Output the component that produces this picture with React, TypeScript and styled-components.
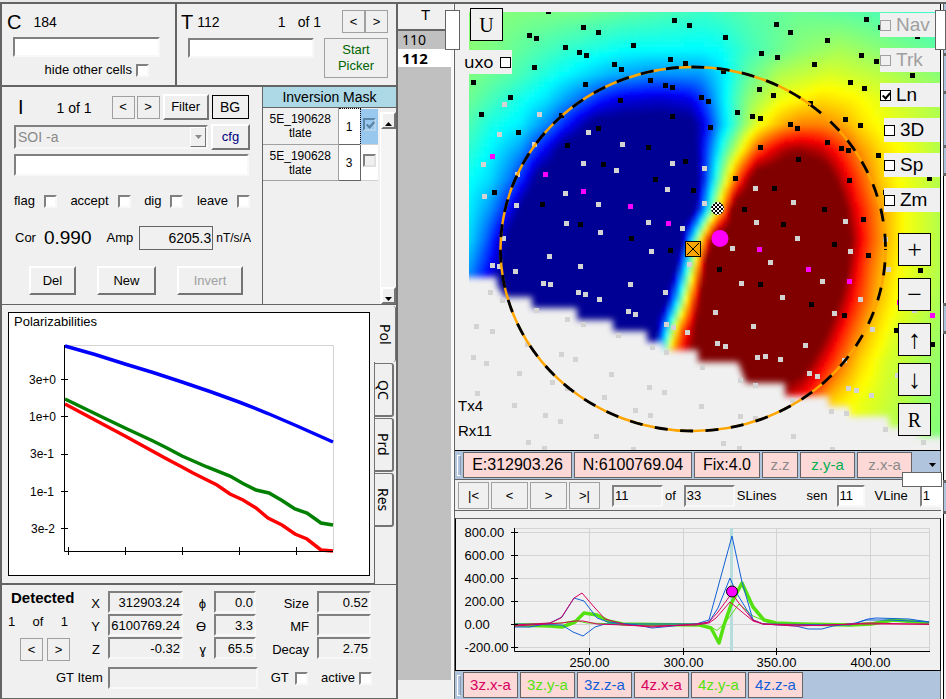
import React from 'react';
import styled, { createGlobalStyle, css } from 'styled-components';

const GlobalStyle = createGlobalStyle`
  * { box-sizing: border-box; }
  body {
    margin: 0;
    background: #f0f0f0;
    color: #000;
    font: 13px/16px "Liberation Sans", Arial, sans-serif;
  }
  button, input, select { font: inherit; color: inherit; margin: 0; border-radius: 0; }
`;

const LINE = '#646464';

/* ---------- shared controls ---------- */

const sunken = css`
  border: 2px solid;
  border-color: #808080 #f8f8f8 #f8f8f8 #808080;
`;

const TextBox = styled.input<{ $w?: number; $readonly?: boolean; $right?: boolean; $h?: number }>`
  ${sunken}
  width: ${p => (p.$w ? `${p.$w}px` : '100%')};
  height: ${p => p.$h ?? 22}px;
  flex: none;
  padding: 0 1px;
  background: ${p => (p.$readonly ? '#f0f0f0' : '#fff')};
  text-align: ${p => (p.$right ? 'right' : 'left')};
  outline: none;
`;

const Tick = styled.input.attrs({ type: 'checkbox' })<{ $flat?: boolean }>`
  appearance: none;
  flex: none;
  width: ${p => (p.$flat ? 11 : 13)}px;
  height: ${p => (p.$flat ? 11 : 13)}px;
  background: #fff;
  ${p => (p.$flat ? css`border: 1px solid #000;` : sunken)}
  position: relative;
  &:disabled { background: #f0f0f0; border-color: #a0a0a0; }
  &:checked::after {
    content: "";
    position: absolute;
    left: 3px;
    top: 0;
    width: 3px;
    height: 6px;
    border: solid #000;
    border-width: 0 2px 2px 0;
    transform: rotate(42deg);
  }
`;

const FlatButton = styled.button<{ $w: number; $h?: number; $color?: string }>`
  width: ${p => p.$w}px;
  height: ${p => p.$h ?? 23}px;
  flex: none;
  padding: 0;
  background: #f0f0f0;
  border: 1px solid #a0a0a0;
  color: ${p => p.$color ?? '#000'};
`;

const RaisedButton = styled.button<{ $w: number; $h?: number; $color?: string }>`
  width: ${p => p.$w}px;
  height: ${p => p.$h ?? 26}px;
  flex: none;
  padding: 0;
  background: #f0f0f0;
  border: 2px solid;
  border-color: #fff #747474 #747474 #fff;
  color: ${p => p.$color ?? '#000'};
  &:disabled { color: #a0a0a0; }
`;

const CheckLabel = styled.label<{ $gap?: number }>`
  display: flex;
  align-items: center;
  gap: ${p => p.$gap ?? 4}px;
`;

const Row = styled.div<{ $gap?: number; $h?: number }>`
  display: flex;
  align-items: center;
  gap: ${p => p.$gap ?? 4}px;
  height: ${p => (p.$h ? `${p.$h}px` : 'auto')};
`;

const Big = styled.span`
  font-size: 20px;
  line-height: 24px;
`;

const Medium = styled.span`
  font-size: 14px;
`;

/* ---------- page frame ---------- */

const Page = styled.main`
  display: grid;
  grid-template-columns: 397px 56px 2px minmax(0, 1fr) 5px;
  grid-template-rows: 4px auto;
  min-height: 100vh;
  position: relative;
`;

const TopEdge = styled.div`
  grid-column: 1 / -1;
  background: #e8e8e8;
  border-bottom: 2px solid ${LINE};
`;

const Sidebar = styled.div`
  display: flex;
  flex-direction: column;
  border-left: 2px solid ${LINE};
  border-right: 1px solid ${LINE};
`;

const Split = styled.div`
  background: #fff;
  border-right: 1px solid ${LINE};
`;

const Handle = styled.div<{ $left?: number; $right?: number; $top: number; $w: number; $h: number }>`
  position: absolute;
  z-index: 2;
  top: ${p => p.$top}px;
  ${p => (p.$left !== undefined ? `left: ${p.$left}px;` : '')}
  ${p => (p.$right !== undefined ? `right: ${p.$right}px;` : '')}
  width: ${p => p.$w}px;
  height: ${p => p.$h}px;
  background: #fff;
  border: 1px solid ${LINE};
`;

/* ---------- cell and target ---------- */

const TopPanels = styled.div`
  display: grid;
  grid-template-columns: 175px 1fr;
  height: 83px;
  border-bottom: 2px solid ${LINE};
`;

const CellPanel = styled.section`
  border-right: 2px solid ${LINE};
  padding: 5px 14px 0 5px;
`;

const CellField = styled.div`
  padding: 3px 0 5px 6px;
  display: flex;
`;

const CellCheck = styled(CheckLabel)`
  justify-content: flex-end;
  padding-right: 12px;
`;

const TargetPanel = styled.section`
  padding: 5px 8px 0 4px;
`;

const Spacer = styled.span`
  flex: 1;
`;

const Count = styled.span<{ $gap?: number }>`
  display: flex;
  gap: ${p => p.$gap ?? 4}px;
  font-size: 14px;
`;

const Pair = styled.span`
  display: flex;
  padding-left: 17px;
`;

const TargetFields = styled.div`
  display: flex;
  justify-content: space-between;
  padding: 4px 0 0 7px;
`;

/* ---------- inversion ---------- */

const Middle = styled.div`
  display: grid;
  grid-template-columns: 261px 1fr;
  height: 218px;
  border-bottom: 1px solid ${LINE};
`;

const InversionPanel = styled.section`
  border-right: 1px solid ${LINE};
  padding: 7px 12px 0;
`;

const InversionHead = styled.div`
  display: flex;
  align-items: center;
  height: 26px;
  padding-left: 4px;
`;

const InversionCount = styled.span`
  font-size: 14px;
  padding: 2px 20px 0 33px;
  white-space: nowrap;
`;

const BgButton = styled(RaisedButton)`
  border: 1px solid #000;
  margin-left: 3px;
  font-size: 14px;
`;

const StepButtons = styled.span`
  display: flex;
  gap: 2px;
  padding-right: 3px;
`;

const SelectWrap = styled.div`
  position: relative;
  width: 194px;
`;

const Select = styled.select`
  ${sunken}
  appearance: none;
  width: 100%;
  height: 24px;
  padding: 0 2px;
  font-size: 14px;
  background: #f0f0f0;
  opacity: 1;
  &:disabled { color: #8a8a8a; }
`;

const SelectArrow = styled.span`
  position: absolute;
  right: 2px;
  top: 2px;
  width: 16px;
  height: 20px;
  display: grid;
  place-items: center;
  background: #f0f0f0;
  border: 1px solid;
  border-color: #fff #747474 #747474 #fff;
  pointer-events: none;
`;

const Flags = styled.div`
  display: flex;
  justify-content: space-between;
  padding: 17px 0 14px;
`;

const Fit = styled.div`
  display: flex;
  align-items: center;
  height: 30px;
  padding-left: 1px;
  white-space: nowrap;
`;

const Cor = styled.output`
  font-size: 19px;
  padding: 0 15px 0 8px;
`;

const AmpBox = styled(TextBox)`
  border: 1px solid ${LINE};
  margin: 0 3px 0 6px;
  font-size: 14px;
`;

const Unit = styled.span`
  font-size: 12px;
`;

const Actions = styled.div`
  display: flex;
  justify-content: space-between;
  padding: 13px 7px 0 15px;
`;

const MaskPanel = styled.section`
  display: flex;
  flex-direction: column;
`;

const MaskTitle = styled.h2`
  margin: 0;
  height: 21px;
  font: 14px/20px "Liberation Sans", Arial, sans-serif;
  text-align: center;
  background: #add8e6;
  border-bottom: 1px solid ${LINE};
`;

const MaskBody = styled.div`
  flex: 1;
  display: flex;
  justify-content: space-between;
`;

const MaskTable = styled.table`
  border-collapse: collapse;
  align-self: flex-start;
  font-size: 12px;
  line-height: 14px;
  table-layout: fixed;
  width: 115px;
  th, td { height: 36px; padding: 0; text-align: center; font-weight: normal; }
  th { border-bottom: 1px solid #a0a0a0; border-right: 1px solid #a0a0a0; }
`;

const MaskNumber = styled.td<{ $focus?: boolean }>`
  width: 22px;
  background: #fff;
  border: 1px solid ${LINE};
  ${p => (p.$focus ? 'border: 1px dotted #000;' : '')}
`;

const MaskCheck = styled.td<{ $on?: boolean }>`
  width: 18px;
  vertical-align: top;
  background: ${p => (p.$on ? '#99c8ee' : '#fff')};
  border-bottom: 1px solid #d0d0d0;
  input {
    margin-top: 9px;
    background: ${p => (p.$on ? 'transparent' : '#f0f0f0')};
    border-color: ${p => (p.$on ? '#5d87a8 #b4d4ec #b4d4ec #5d87a8' : '#808080 #e0e0e0 #e0e0e0 #808080')};
  }
  input:checked::after { border-color: #56819f; }
`;

const ScrollTrack = styled.div`
  width: 16px;
  margin-top: 4px;
  display: flex;
  flex-direction: column;
  justify-content: space-between;
  background: #f4f4f4;
  border-left: 1px solid #fff;
`;

/* ---------- tabs ---------- */

const TabArea = styled.section`
  display: grid;
  grid-template-columns: 1fr 21px;
  height: 278px;
  margin-top: 1px;
`;

const TabBody = styled.div`
  padding: 6px 4px 6px 6px;
  border-bottom: 1px solid ${LINE};
  border-right: 1px solid ${LINE};
`;

const PlotFrame = styled.div`
  height: 264px;
  background: #fff;
  border: 1px solid #000;
  svg { display: block; width: 100%; height: 100%; }
`;

const TabList = styled.div`
  display: flex;
  flex-direction: column;
  gap: 1px;
  margin-left: -1px;
`;

const Tab = styled.button<{ $active?: boolean }>`
  writing-mode: vertical-rl;
  width: ${p => (p.$active ? 22 : 20)}px;
  height: ${p => (p.$active ? 56 : 54)}px;
  padding: 0;
  font: 14px/18px "Noto Sans", sans-serif;
  text-align: center;
  background: #f0f0f0;
  border: solid #747474;
  border-width: ${p => (p.$active ? '0 1px 0 0' : '1px 2px 2px 1px')};
  border-radius: 0 3px 3px 0;
`;

/* ---------- detected ---------- */

const DetectedPanel = styled.section`
  flex: 1;
  border-top: 1px solid ${LINE};
  border-bottom: 1px solid ${LINE};
  padding: 6px 0;
`;

const DetectedGrid = styled.div`
  display: grid;
  grid-template-columns: 74px 32px 75px 31px 42px 61px 54px;
  grid-auto-rows: 23px;
  label { font-size: 13px; line-height: 25px; text-align: right; padding-right: 8px; }
`;

const DetectedSide = styled.div`
  grid-row: 1 / span 3;
  h2 { margin: -2px 0 7px 9px; font-size: 15px; line-height: 18px; }
`;

const DetectedCount = styled.div`
  display: flex;
  justify-content: space-between;
  padding: 0 8px 0 6px;
`;

const DetectedSteps = styled.div`
  display: flex;
  gap: 4px;
  padding: 8px 0 0 18px;
`;

const TruthRow = styled.div`
  display: flex;
  align-items: center;
  padding: 7px 24px 0 54px;
  white-space: nowrap;
`;

const TruthInput = styled(TextBox)`
  margin: 0 13px 0 5px;
`;

/* ---------- target list ---------- */

const ListColumn = styled.section`
  display: flex;
  flex-direction: column;
  border-left: 1px solid ${LINE};
  padding-bottom: 19px;
  h2 { margin: 0; height: 25px; font: 15px/22px "Liberation Sans", Arial, sans-serif; text-align: center; }
`;

const TargetList = styled.ul`
  flex: 1;
  margin: 0;
  padding: 0;
  list-style: none;
  background: #c0c0c0;
  border-top: 2px solid ${LINE};
  border-right: 2px solid #f8f8f8;
`;

const TargetItem = styled.li<{ $active?: boolean }>`
  height: 18px;
  padding-left: 4px;
  font: ${p => (p.$active ? 'bold 15px/18px' : '14px/18px')} "Noto Sans", sans-serif;
  background: ${p => (p.$active ? '#fff' : 'transparent')};
`;

/* ---------- map ---------- */

const Workspace = styled.div`
  display: flex;
  flex-direction: column;
  min-width: 0;
`;

const MapPanel = styled.section`
  position: relative;
  padding: 8px 0 0 14px;
  border-right: 1px solid #000;
  border-bottom: 1px solid #000;
  > svg { display: block; width: 100%; height: auto; }
`;

const MapButton = styled.button`
  width: 33px;
  height: 33px;
  padding: 0;
  display: grid;
  place-items: center;
  font: 20px/24px "Liberation Serif", serif;
  background: #f0f0f0;
  border: 1px solid #000;
`;

const MapSymbol = styled(MapButton)`
  font-size: 26px;
`;

const ClassCorner = styled.div`
  position: absolute;
  left: 9px;
  top: 4px;
  > button { margin-left: 6px; }
`;

const UxoLabel = styled.label`
  display: flex;
  align-items: center;
  gap: 7px;
  width: 48px;
  height: 24px;
  margin-top: 9px;
  background: #f0f0f0;
  font: 17px/24px "Noto Sans", sans-serif;
`;

const MapLayers = styled.div`
  position: absolute;
  right: 0;
  top: 9px;
  display: flex;
  flex-direction: column;
  align-items: flex-end;
  gap: 11px;
`;

const LayerLabel = styled.label<{ $w: number; $off?: boolean }>`
  display: flex;
  align-items: center;
  gap: 5px;
  width: ${p => p.$w}px;
  height: 24px;
  font-size: 19px;
  background: #f0f0f0;
  color: ${p => (p.$off ? '#a0a0a0' : '#000')};
`;

const MapTools = styled.div`
  position: absolute;
  right: 9px;
  top: 229px;
  display: flex;
  flex-direction: column;
  gap: 12px;
`;

const ToolPair = styled.div`
  display: flex;
  flex-direction: column;
  gap: 7px;
  margin-top: -5px;
`;

const Sensor = styled.div`
  position: absolute;
  left: 3px;
  bottom: 7px;
  font-size: 15px;
  line-height: 25px;
`;

/* ---------- strips and profile ---------- */

const Strip = styled.div`
  display: flex;
  align-items: stretch;
  gap: 2px;
  height: 28px;
  padding: 1px 4px 1px 2px;
  background: #b0c4de;
  border-right: 1px solid ${LINE};
`;

const Grip = styled.span`
  width: 4px;
  margin: 3px 0 2px 0;
  border: 1px solid #fff;
  border-right-color: #8a9bb5;
`;

const Reading = styled.output<{ $w: number }>`
  width: ${p => p.$w}px;
  border: 1px solid ${LINE};
  background: #fcd8d6;
  font-size: 16px;
  line-height: 24px;
  text-align: center;
  white-space: nowrap;
`;

const Channel = styled.button<{ $w: number; $color: string }>`
  width: ${p => p.$w}px;
  padding: 0;
  border: 1px solid ${LINE};
  background: #fcd8d6;
  color: ${p => p.$color};
  font-size: 15px;
  line-height: 22px;
`;

const StripMenu = styled.button`
  margin-left: auto;
  padding: 0;
  border: 0;
  background: none;
  display: grid;
  place-items: center;
`;

const LineBar = styled.div`
  display: flex;
  align-items: center;
  height: 32px;
  padding: 1px 0 0 3px;
  border-top: 1px solid ${LINE};
  border-bottom: 1px solid ${LINE};
  overflow: hidden;
  white-space: nowrap;
`;

const LineSteps = styled.span`
  display: flex;
  gap: 2px;
  padding-right: 12px;
`;

const LineText = styled.label<{ $left: number; $right: number }>`
  padding: 0 ${p => p.$right}px 0 ${p => p.$left}px;
`;

const ProfilePanel = styled.section`
  border: 1px solid #000;
  border-top-color: ${LINE};
  margin-top: 7px;
  svg { display: block; width: 100%; height: auto; }
`;

const Edge = styled.div`
  display: flex;
  flex-direction: column;
  gap: 3px;
  border-left: 2px solid #fff;
  background: ${LINE};
`;

const EdgeSegment = styled.div<{ $grow: number; $plain?: boolean }>`
  flex: ${p => p.$grow} 0 0;
  border-left: 1px solid ${p => (p.$plain ? '#000' : LINE)};
  background: ${p => (p.$plain ? '#f0f0f0' : '#b0c4de')};
`;

/* ---------- map data ---------- */

type Knot = [number, number];

// Normalised field level along each survey row: [northing row, [x, level]...]
const FIELD: [number, Knot[]][] = [
  [12, [[469, .51], [580, .49], [640, .46], [705, .43], [750, .46], [800, .48], [860, .46], [940, .42]]],
  [50, [[469, .51], [500, .49], [560, .43], [620, .38], [700, .37], [720, .38], [750, .44], [800, .51], [840, .54], [880, .51], [940, .47]]],
  [75, [[469, .5], [510, .46], [560, .38], [610, .3], [650, .26], [700, .27], [720, .34], [745, .46], [780, .55], [830, .59], [880, .56], [940, .51]]],
  [100, [[469, .48], [510, .41], [545, .35], [580, .23], [600, .15], [622, .09], [660, .07], [690, .1], [703, .18], [720, .33], [735, .44], [750, .52], [780, .61], [820, .66], [850, .64], [880, .6], [940, .54]]],
  [125, [[469, .45], [490, .4], [520, .36], [550, .24], [565, .15], [580, .06], [595, -.02], [690, -.02], [700, .06], [710, .17], [720, .3], [733, .42], [745, .52], [760, .62], [780, .7], [800, .75], [820, .75], [840, .72], [860, .66], [880, .62], [940, .55]]],
  [150, [[469, .42], [490, .37], [520, .28], [535, .18], [550, .08], [565, -.04], [692, -.04], [703, .12], [713, .28], [723, .42], [733, .53], [745, .66], [755, .78], [770, .88], [785, .96], [800, .98], [820, .94], [840, .84], [860, .73], [880, .66], [940, .55]]],
  [180, [[469, .38], [490, .34], [510, .24], [525, .12], [540, -.04], [696, -.04], [705, .15], [713, .35], [721, .5], [729, .65], [738, .82], [748, .97], [757, 1.1], [825, 1.1], [845, .91], [860, .8], [880, .68], [900, .62], [940, .55]]],
  [210, [[469, .36], [490, .27], [505, .16], [525, -.04], [693, -.04], [702, .2], [709, .4], [715, .55], [721, .7], [727, .86], [735, 1.1], [838, 1.1], [855, .9], [870, .79], [885, .7], [905, .62], [940, .55]]],
  [240, [[469, .34], [485, .23], [500, .08], [510, -.04], [682, -.04], [688, .2], [693, .38], [698, .55], [704, .75], [710, .93], [716, 1.1], [843, 1.1], [860, .89], [872, .79], [888, .69], [905, .62], [940, .55]]],
  [270, [[469, .28], [485, .15], [500, .03], [505, -.04], [674, -.04], [681, .2], [687, .4], [693, .6], [699, .8], [706, 1.1], [840, 1.1], [856, .89], [870, .77], [885, .68], [905, .61], [940, .55]]],
  [300, [[469, .15], [495, 0], [500, -.04], [665, -.04], [673, .2], [680, .42], [687, .65], [694, .85], [702, 1.05], [830, 1.1], [850, .89], [862, .8], [878, .69], [900, .61], [940, .54]]],
  [330, [[469, 0], [656, -.02], [663, .2], [669, .42], [675, .62], [682, .8], [692, .95], [700, 1.1], [818, 1.1], [838, .9], [852, .79], [868, .69], [893, .6], [940, .53]]],
  [360, [[469, 0], [655, .1], [664, .5], [672, .8], [682, .9], [700, 1.1], [800, 1.1], [824, .9], [842, .77], [860, .67], [885, .59], [940, .52]]],
  [400, [[469, 1], [775, 1], [795, .88], [815, .78], [833, .67], [860, .61], [890, .57], [940, .51]]],
  [450, [[469, .9], [785, .85], [830, .64], [860, .59], [890, .55], [940, .5]]],
];

const levelInRow = (knots: Knot[], x: number) => {
  if (x <= knots[0][0]) return knots[0][1];
  for (let i = 1; i < knots.length; i++) {
    const [x1, v1] = knots[i];
    if (x <= x1) {
      const [x0, v0] = knots[i - 1];
      return v0 + ((v1 - v0) * (x - x0)) / (x1 - x0);
    }
  }
  return knots[knots.length - 1][1];
};

const level = (x: number, y: number) => {
  if (y <= FIELD[0][0]) return levelInRow(FIELD[0][1], x);
  for (let i = 1; i < FIELD.length; i++) {
    if (y <= FIELD[i][0]) {
      const t = (y - FIELD[i - 1][0]) / (FIELD[i][0] - FIELD[i - 1][0]);
      return levelInRow(FIELD[i - 1][1], x) * (1 - t) + levelInRow(FIELD[i][1], x) * t;
    }
  }
  return levelInRow(FIELD[FIELD.length - 1][1], x);
};

const jet = (v: number) => {
  const c = Math.min(1, Math.max(0.02, v));
  const ch = (mid: number) =>
    Math.round(255 * Math.min(1, Math.max(0, 1.5 - Math.abs(4 * c - mid))));
  return `rgb(${ch(3)},${ch(2)},${ch(1)})`;
};

const CELL = 5;
const cells: { x: number; y: number; fill: string }[] = [];
for (let y = 2; y < 455; y += CELL) {
  for (let x = 459; x < 952; x += CELL) {
    cells.push({ x, y, fill: jet(level(x + CELL / 2, y + CELL / 2)) });
  }
}

const BLACK: Knot[] = [
  [548, 11], [583, 27], [598, 32], [529, 35], [536, 38], [565, 47], [579, 52], [586, 55], [534, 67], [633, 45],
  [674, 20], [689, 25], [670, 59], [685, 63], [614, 64], [621, 69], [650, 80], [665, 85], [672, 87], [701, 97],
  [585, 84], [473, 82], [510, 97], [620, 100], [481, 114], [561, 115], [672, 116], [518, 132], [598, 128],
  [567, 145], [648, 147], [685, 161], [603, 164], [655, 179], [693, 190], [494, 192], [542, 204], [580, 224],
  [776, 24], [790, 32], [725, 37], [761, 53], [777, 57], [827, 40], [814, 64], [866, 19], [880, 27], [861, 55],
  [876, 61], [912, 75], [917, 36], [723, 71], [759, 89], [773, 95], [810, 103], [850, 82], [864, 88], [708, 101],
  [737, 112], [752, 116], [760, 118], [710, 127], [790, 124], [797, 128], [845, 119], [860, 125], [827, 142],
  [841, 148], [848, 150], [760, 147], [798, 159], [878, 155], [897, 139], [886, 160], [735, 178], [774, 188],
  [849, 180], [929, 178], [744, 209], [824, 209], [863, 219], [783, 224], [885, 192], [631, 238], [670, 250],
  [834, 244], [868, 255], [719, 269], [760, 284], [920, 270], [811, 304], [844, 315], [896, 330], [932, 344],
];

const GREY: Knot[] = [
  [504, 104], [539, 114], [499, 134], [588, 132], [534, 144], [622, 144], [483, 164], [583, 163], [616, 170],
  [672, 163], [517, 174], [565, 193], [667, 189], [484, 196], [516, 205], [598, 204], [566, 223], [648, 222],
  [682, 228], [704, 168], [704, 203], [755, 188], [793, 202], [845, 221], [756, 222], [600, 232], [503, 238],
  [549, 256], [651, 251], [689, 264], [492, 265], [499, 266], [580, 266], [515, 271], [543, 283], [550, 284],
  [630, 284], [578, 292], [585, 294], [490, 292], [502, 300], [599, 299], [665, 292], [628, 311], [635, 314],
  [536, 310], [567, 319], [583, 324], [476, 326], [492, 331], [618, 335], [666, 324], [673, 327], [687, 332],
  [652, 347], [666, 352], [561, 354], [575, 359], [473, 357], [486, 363], [519, 373], [527, 344], [611, 374],
  [552, 382], [567, 388], [649, 387], [664, 392], [477, 393], [604, 397], [514, 405], [702, 367], [701, 406],
  [635, 410], [650, 415], [545, 415], [560, 421], [596, 436], [528, 442], [544, 448], [633, 449], [732, 248],
  [797, 238], [850, 251], [770, 262], [885, 239], [888, 269], [822, 281], [741, 283], [782, 297], [860, 299],
  [715, 312], [834, 313], [753, 326], [872, 329], [717, 343], [725, 346], [805, 345], [757, 357], [765, 356],
  [780, 359], [844, 360], [740, 380], [755, 385], [809, 373], [817, 376], [848, 388], [856, 390], [871, 395],
  [792, 400], [831, 411], [846, 413], [740, 416], [755, 418], [793, 436], [885, 429], [923, 442], [723, 443],
  [739, 448], [832, 449], [897, 375], [914, 310],
];

const MAGENTA: Knot[] = [
  [492, 156], [545, 174], [583, 191], [630, 206], [668, 223], [759, 249], [808, 269], [849, 281], [932, 315], [899, 302],
];

const Dots = ({ points, fill }: { points: Knot[]; fill: string }) => (
  <g fill={fill} shapeRendering="crispEdges">
    {points.map(([x, y]) => (
      <rect key={`${x}-${y}`} x={x - 2.5} y={y - 2.5} width={5} height={5} />
    ))}
  </g>
);

const FieldMap = () => (
  <svg viewBox="469 12 471 438" role="img" aria-label="Field map">
    <defs>
      <filter id="smooth" x="0" y="0" width="1" height="1">
        <feGaussianBlur stdDeviation="2" />
      </filter>
      <filter id="fade" x="-5%" y="-5%" width="110%" height="110%">
        <feGaussianBlur stdDeviation="3" />
      </filter>
      <pattern id="checks" width="4" height="4" patternUnits="userSpaceOnUse" x="717" y="208">
        <rect width="4" height="4" fill="#fff" />
        <path d="M0 0h2v2h-2zM2 2h2v2h-2z" fill="#000" />
      </pattern>
    </defs>
    <g filter="url(#smooth)" shapeRendering="crispEdges">
      {cells.map(c => (
        <rect key={`${c.x}-${c.y}`} x={c.x} y={c.y} width={CELL} height={CELL} fill={c.fill} />
      ))}
    </g>
    <path
      filter="url(#fade)"
      fill="#f0f0f0"
      d="M455 277H497V285L505 297H532V308H577V320H613V331H647V342H664V350H698V362H738L746 383H785V396H829V406H850V416H889V427H919V437H960V470H455Z"
    />
    <Dots points={GREY} fill="#d3d3d3" />
    <Dots points={BLACK} fill="#000" />
    <Dots points={MAGENTA} fill="#ff00ff" />
    <g fill="none">
      <ellipse cx="693" cy="249" rx="192.5" ry="182" stroke="#ffa500" strokeWidth="2.5" />
      <ellipse cx="693" cy="249" rx="192.5" ry="182" stroke="#000" strokeWidth="2.8" strokeDasharray="13 12.5" strokeDashoffset="12" />
    </g>
    <circle cx="720" cy="238.500" r="8.500" fill="#ff00ff" />
    <circle cx="717.500" cy="208.500" r="6.500" fill="url(#checks)" />
    <rect x="685.500" y="241.500" width="15" height="15" fill="#ffa500" stroke="#000" />
    <path d="M687 243L699 255M699 243L687 255" stroke="#000" />
  </svg>
);

/* ---------- plots ---------- */

const Polarizabilities = () => (
  <svg viewBox="9 313 360 262" role="img" aria-label="Polarizabilities" fontFamily="Liberation Sans, Arial, sans-serif" fontSize="12">
    <text x="14" y="326" fontSize="13">Polarizabilities</text>
    <path d="M65 345.500H333.500V551" fill="none" stroke="#d3d3d3" />
    <g fill="none" strokeWidth="3.5">
      <path stroke="#00f" d="M65 346L95 354.500L125 364L153 372.500L182 382L210 391.500L239 402L268 413.500L297 426L333 442" />
      <path stroke="#008000" d="M65 399L100 416L125 428L153 441L167 448L182 456L207 467L230 476L243 483.500L256 490L269 493L282 500.500L295 509L307 513L321 523L333 525" />
      <path stroke="#f00" d="M65 404L95 420L125 436L165 458L182 467L193 473L217 485L230 494L243 500L256 508L268 518L282 525L295 534L307 539L321 550L333 551" />
    </g>
    <path
      d="M64.500 345V551.500H333M61 379.500H68M61 416.500H68M61 454.500H68M61 491.500H68M61 528.500H68M68.500 547V555M125.500 547V555M182.500 547V555M239.500 547V555M296.500 547V555"
      fill="none"
      stroke="#000"
    />
    <g textAnchor="end">
      <text x="56" y="384">3e+0</text>
      <text x="56" y="421">1e+0</text>
      <text x="54" y="458">3e-1</text>
      <text x="54" y="496">1e-1</text>
      <text x="55" y="533">3e-2</text>
    </g>
  </svg>
);

const LEVELS = ['800.00', '600.00', '400.00', '200.00', '0.00', '-200.00'];
const STATIONS: [number, string][] = [[589.5, '250.00'], [683.5, '300.00'], [776.5, '350.00'], [870.5, '400.00']];

const LineProfile = () => (
  <svg viewBox="456 519 484 151" role="img" aria-label="Line profile" fontFamily="Liberation Sans, Arial, sans-serif" fontSize="13">
    <path
      d="M514 528.500H929.500V651M514 532.500H930M514 555.500H930M514 578.500H930M514 601.500H930M514 624.500H930M514 647.500H930M589.500 528V651M683.500 528V651M776.500 528V651M870.500 528V651"
      fill="none"
      stroke="#d3d3d3"
    />
    <rect x="730" y="528" width="3" height="123" fill="#b8dcdc" />
    <g fill="none" strokeLinejoin="round">
      <g stroke="#55e010">
        <path strokeWidth="3.5" d="M514 625L550 626L562 627L575 622L584 613L597 615L608 621L623 624L655 624.500L700 625L711 628L719 643L724 625L732 602L742 583L753 607L764 620L776 623L800 624L850 625L871 624L893 620L929 623" />
        <path d="M514 624L562 623L575 620.500L587 623L620 624L700 625L711 627L717 630.500L725 623L739 604L753 616L770 623L850 624L900 621L929 623" />
      </g>
      <g stroke="#1060d8">
        <path d="M514 627L530 627L550 623L562 617L574 598L584 601L597 618L608 622L637 625L652 628L663 627L683 625L696 624L709 620L732 536L742 582L753 620L763 624L796 626L808 629L822 629L833 626L856 623L868 619L876 618L909 619L929 622" />
        <path d="M514 624L562 625L573 632L583 636L595 627L605 624L700 624L709 622L718 608L730 578L736 592L753 620L763 624L850 625L866 620L890 620L929 622" />
      </g>
      <g stroke="#d80060">
        <path d="M514 625L550 623L561 618L574 598L582 593L595 608L605 619L627 625L652 627L696 624L709 622L718 612L732 593L738 602L753 620L763 624L796 626L860 624L929 624" />
        <path d="M514 626L562 623L575 621L583 621L597 624L650 626L696 625L709 623L716 618L730 602L753 621L763 624L820 625.500L870 623L929 624.500" />
      </g>
    </g>
    <circle cx="732" cy="591.500" r="5.500" fill="#ff00ff" stroke="#000" />
    <path
      d="M514.500 528V651.500H930M511 532.500H518M511 555.500H518M511 578.500H518M511 601.500H518M511 624.500H518M511 647.500H518M589.500 648V655M683.500 648V655M776.500 648V655M870.500 648V655"
      fill="none"
      stroke="#000"
    />
    {LEVELS.map((label, i) => (
      <text key={label} x={464.5} y={537 + i * 23}>{label}</text>
    ))}
    {STATIONS.map(([x, label]) => (
      <text key={label} x={x} y={667} textAnchor="middle">{label}</text>
    ))}
  </svg>
);

const Arrow = ({ up, color = '#000' }: { up?: boolean; color?: string }) => (
  <svg width="7" height="4" viewBox="0 0 7 4" aria-hidden="true">
    <path d={up ? 'M0 4L3.500 0L7 4Z' : 'M0 0L3.500 4L7 0Z'} fill={color} />
  </svg>
);

/* ---------- app ---------- */

const FLAGS = ['flag', 'accept', 'dig', 'leave'];

const DETECTED: [string, string][][] = [
  [['X', '312903.24'], ['ϕ', '0.0'], ['Size', '0.52']],
  [['Y', '6100769.24'], ['ϴ', '3.3'], ['MF', '']],
  [['Z', '-0.32'], ['ɣ', '65.5'], ['Decay', '2.75']],
];

const LAYERS = [
  { name: 'Nav', w: 60, off: true },
  { name: 'Trk', w: 60, off: true },
  { name: 'Ln', w: 60, on: true },
  { name: '3D', w: 56 },
  { name: 'Sp', w: 56 },
  { name: 'Zm', w: 56 },
];

const CHANNELS: [string, string][] = [
  ['3z.x-a', '#d80060'],
  ['3z.y-a', '#55e010'],
  ['3z.z-a', '#1060d8'],
  ['4z.x-a', '#d80060'],
  ['4z.y-a', '#55e010'],
  ['4z.z-a', '#1060d8'],
];

export default function App() {
  return (
    <Page>
      <GlobalStyle />
      <TopEdge />

      <Sidebar>
        <TopPanels>
          <CellPanel>
            <Row $gap={12} $h={25}>
              <Big>C</Big>
              <Medium>184</Medium>
            </Row>
            <CellField>
              <TextBox $w={147} $h={20} aria-label="Cell note" />
            </CellField>
            <CellCheck>
              hide other cells
              <Tick />
            </CellCheck>
          </CellPanel>
          <TargetPanel>
            <Row $h={25}>
              <Big>T</Big>
              <Medium>112</Medium>
              <Spacer />
              <Count $gap={12}>
                <span>1</span>
                <span>of 1</span>
              </Count>
              <Pair>
                <FlatButton $w={23}>&lt;</FlatButton>
                <FlatButton $w={23}>&gt;</FlatButton>
              </Pair>
            </Row>
            <TargetFields>
              <TextBox $w={126} $h={20} aria-label="Target note" />
              <FlatButton $w={64} $h={40} $color="#006400">Start Picker</FlatButton>
            </TargetFields>
          </TargetPanel>
        </TopPanels>

        <Middle>
          <InversionPanel>
            <InversionHead>
              <Big>I</Big>
              <InversionCount>1 of 1</InversionCount>
              <StepButtons>
                <FlatButton $w={23}>&lt;</FlatButton>
                <FlatButton $w={23}>&gt;</FlatButton>
              </StepButtons>
              <RaisedButton $w={46}>Filter</RaisedButton>
              <BgButton $w={37} $h={24}>BG</BgButton>
            </InversionHead>
            <Row $gap={3} $h={34}>
              <SelectWrap>
                <Select disabled aria-label="Inversion source" defaultValue="SOI -a">
                  <option>SOI -a</option>
                </Select>
                <SelectArrow><Arrow color="#8a8a8a" /></SelectArrow>
              </SelectWrap>
              <RaisedButton $w={39} $color="#000080">cfg</RaisedButton>
            </Row>
            <Row>
              <TextBox $w={235} aria-label="Inversion note" />
            </Row>
            <Flags>
              {FLAGS.map(name => (
                <CheckLabel key={name} $gap={9}>
                  {name}
                  <Tick />
                </CheckLabel>
              ))}
            </Flags>
            <Fit>
              <span>Cor</span>
              <Cor>0.990</Cor>
              <label htmlFor="amp">Amp</label>
              <AmpBox id="amp" $w={74} $h={24} $readonly $right readOnly defaultValue="6205.3" />
              <Unit>nT/s/A</Unit>
            </Fit>
            <Actions>
              <RaisedButton $w={47} $h={29}>Del</RaisedButton>
              <RaisedButton $w={59} $h={29}>New</RaisedButton>
              <RaisedButton $w={66} $h={29} disabled>Invert</RaisedButton>
            </Actions>
          </InversionPanel>

          <MaskPanel>
            <MaskTitle>Inversion Mask</MaskTitle>
            <MaskBody>
              <MaskTable>
                <tbody>
                  <tr>
                    <th scope="row">5E_190628<br />tlate</th>
                    <MaskNumber $focus>1</MaskNumber>
                    <MaskCheck $on><Tick defaultChecked aria-label="Mask 1" /></MaskCheck>
                  </tr>
                  <tr>
                    <th scope="row">5E_190628<br />tlate</th>
                    <MaskNumber>3</MaskNumber>
                    <MaskCheck><Tick aria-label="Mask 3" /></MaskCheck>
                  </tr>
                </tbody>
              </MaskTable>
              <ScrollTrack>
                <RaisedButton $w={15} $h={17} aria-label="Scroll up"><Arrow up /></RaisedButton>
                <RaisedButton $w={15} $h={17} aria-label="Scroll down"><Arrow /></RaisedButton>
              </ScrollTrack>
            </MaskBody>
          </MaskPanel>
        </Middle>

        <TabArea>
          <TabBody>
            <PlotFrame>
              <Polarizabilities />
            </PlotFrame>
          </TabBody>
          <TabList role="tablist">
            <Tab role="tab" $active aria-selected="true">Pol</Tab>
            <Tab role="tab">QC</Tab>
            <Tab role="tab">Prd</Tab>
            <Tab role="tab">Res</Tab>
          </TabList>
        </TabArea>

        <DetectedPanel>
          <DetectedGrid>
            <DetectedSide>
              <h2>Detected</h2>
              <DetectedCount>
                <span>1</span>
                <span>of</span>
                <span>1</span>
              </DetectedCount>
              <DetectedSteps>
                <FlatButton $w={23}>&lt;</FlatButton>
                <FlatButton $w={23}>&gt;</FlatButton>
              </DetectedSteps>
            </DetectedSide>
            {DETECTED.flat().map(([name, value]) => (
              <React.Fragment key={name}>
                <label htmlFor={`detected-${name}`}>{name}</label>
                <TextBox id={`detected-${name}`} $readonly $right readOnly defaultValue={value} />
              </React.Fragment>
            ))}
          </DetectedGrid>
          <TruthRow>
            <label htmlFor="gt-item">GT Item</label>
            <TruthInput id="gt-item" $w={150} $readonly readOnly />
            <CheckLabel $gap={6}>
              GT
              <Tick />
            </CheckLabel>
            <Spacer />
            <CheckLabel $gap={4}>
              active
              <Tick />
            </CheckLabel>
          </TruthRow>
        </DetectedPanel>
      </Sidebar>

      <ListColumn>
        <h2>T</h2>
        <TargetList>
          <TargetItem>110</TargetItem>
          <TargetItem $active>112</TargetItem>
        </TargetList>
      </ListColumn>

      <Split />

      <Workspace>
        <MapPanel>
          <FieldMap />
          <ClassCorner>
            <MapButton>U</MapButton>
            <UxoLabel>
              uxo
              <Tick $flat />
            </UxoLabel>
          </ClassCorner>
          <MapLayers>
            {LAYERS.map(layer => (
              <LayerLabel key={layer.name} $w={layer.w} $off={layer.off}>
                <Tick $flat disabled={layer.off} defaultChecked={layer.on} />
                {layer.name}
              </LayerLabel>
            ))}
          </MapLayers>
          <MapTools>
            <MapSymbol aria-label="Zoom in">+</MapSymbol>
            <MapSymbol aria-label="Zoom out">−</MapSymbol>
            <MapSymbol aria-label="Previous">↑</MapSymbol>
            <ToolPair>
              <MapSymbol aria-label="Next">↓</MapSymbol>
              <MapButton aria-label="Reset">R</MapButton>
            </ToolPair>
          </MapTools>
          <Sensor>
            <div>Tx4</div>
            <div>Rx11</div>
          </Sensor>
        </MapPanel>

        <Strip>
          <Grip />
          <Reading $w={109}>E:312903.26</Reading>
          <Reading $w={118}>N:6100769.04</Reading>
          <Reading $w={66}>Fix:4.0</Reading>
          <Channel $w={36} $color="#8a8a8a">z.z</Channel>
          <Channel $w={55} $color="#00b050">z.y-a</Channel>
          <Channel $w={55} $color="#8a8a8a">z.x-a</Channel>
          <StripMenu aria-label="More channels"><Arrow /></StripMenu>
        </Strip>

        <LineBar>
          <LineSteps>
            <FlatButton $w={31} $h={27}>|&lt;</FlatButton>
            <FlatButton $w={37} $h={27}>&lt;</FlatButton>
            <FlatButton $w={37} $h={27}>&gt;</FlatButton>
            <FlatButton $w={31} $h={27}>&gt;|</FlatButton>
          </LineSteps>
          <TextBox $w={51} $readonly aria-label="Line" defaultValue="11" />
          <LineText htmlFor="lines" $left={2} $right={8}>of</LineText>
          <TextBox id="lines" $w={51} $readonly readOnly defaultValue="33" />
          <LineText htmlFor="lines" $left={2} $right={30}>SLines</LineText>
          <LineText htmlFor="sen" $left={0} $right={9}>sen</LineText>
          <TextBox id="sen" $w={28} defaultValue="11" />
          <LineText htmlFor="vline" $left={10} $right={12}>VLine</LineText>
          <TextBox id="vline" $w={28} defaultValue="1" />
        </LineBar>

        <ProfilePanel>
          <LineProfile />
        </ProfilePanel>

        <Strip>
          <Grip />
          {CHANNELS.map(([name, color]) => (
            <Channel key={name} $w={55} $color={color}>{name}</Channel>
          ))}
        </Strip>
      </Workspace>

      <Edge>
        <EdgeSegment $grow={50} />
        <EdgeSegment $grow={36} />
        <EdgeSegment $grow={52} />
        <EdgeSegment $grow={26} />
        <EdgeSegment $grow={130} $plain />
        <EdgeSegment $grow={26} />
        <EdgeSegment $grow={150} $plain />
        <EdgeSegment $grow={28} />
        <EdgeSegment $grow={190} $plain />
      </Edge>

      <Handle $left={445} $top={10} $w={15} $h={40} />
      <Handle $right={0} $top={10} $w={11} $h={40} />
      <Handle $right={4} $top={472} $w={40} $h={15} />
    </Page>
  );
}
